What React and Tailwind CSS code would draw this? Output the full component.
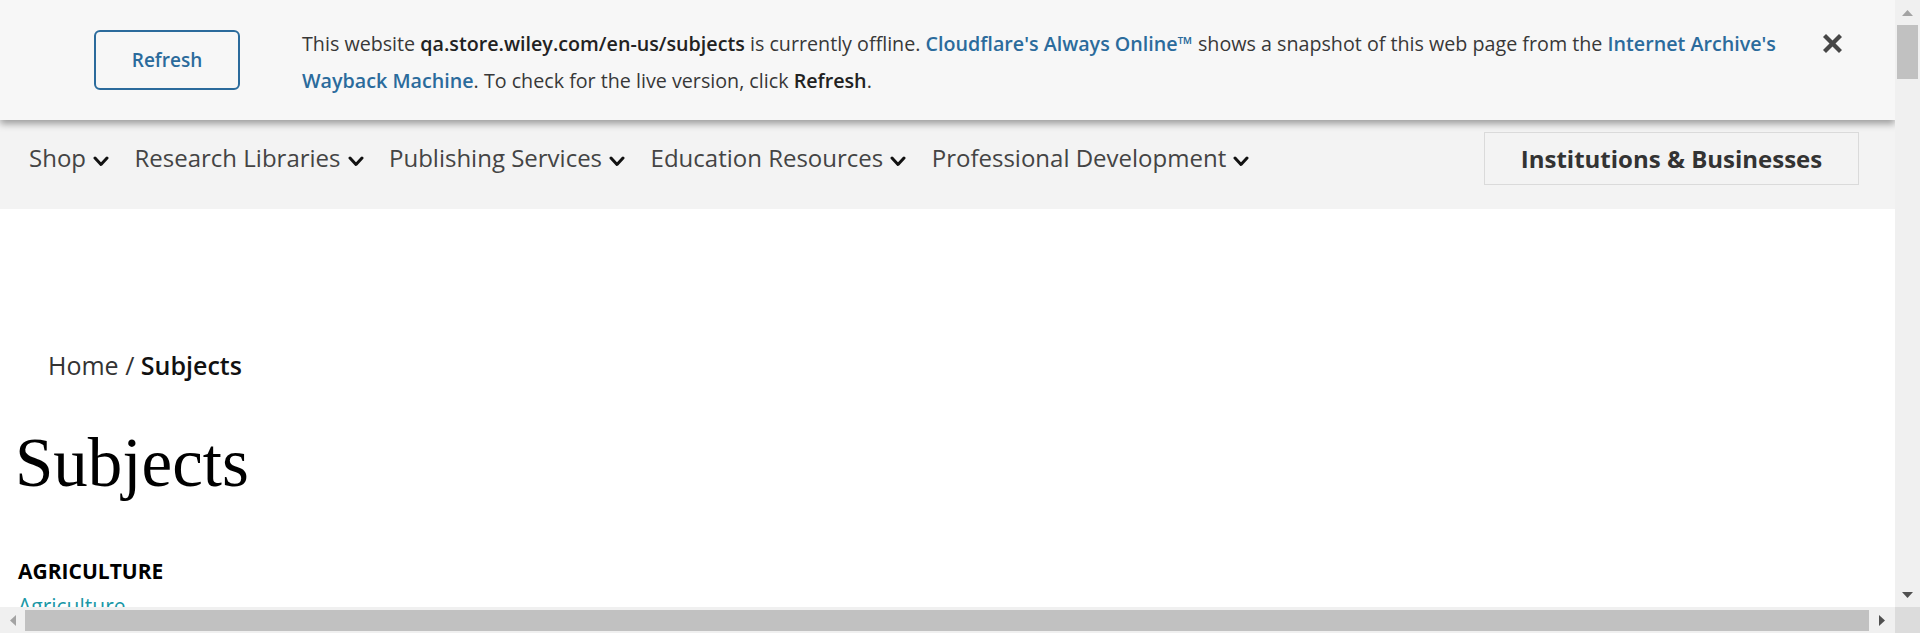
import React from "react";

const Chevron = () => (
  <svg width="16" height="11" viewBox="0 0 16 11" className="ml-[7px] mt-[7px] flex-none">
    <polyline points="2,2 8,8.5 14,2" fill="none" stroke="#111" strokeWidth="3" strokeLinecap="round" strokeLinejoin="round" />
  </svg>
);

const NavItem = ({ label }) => (
  <div className="flex items-center">
    <span>{label}</span>
    <Chevron />
  </div>
);

export default function App() {
  return (
    <div className="w-[1920px] h-[633px] overflow-hidden flex flex-col bg-white" style={{ fontFamily: "'Open Sans', 'Noto Sans', sans-serif" }}>
      <div className="flex flex-1 min-h-0">
        <div className="flex-1 flex flex-col min-w-0 overflow-hidden">
          {/* Banner */}
          <div className="h-[120px] flex-none bg-[#f7f7f7] relative z-10 shadow-[0_4px_7px_rgba(0,0,0,0.35)] flex items-start">
            <button className="ml-[94px] mt-[30px] w-[146px] h-[60px] flex-none rounded-[6px] border-2 border-[#2b6b9c] text-[#2b6b9c] text-[19px] font-semibold flex items-center justify-center">
              Refresh
            </button>
            <div className="ml-[62px] mt-[25px] text-[19.7px] leading-[37px] text-[#383838] whitespace-nowrap flex-none">
              This website <span className="font-semibold text-[#222]">qa.store.wiley.com/en-us/subjects</span> is currently offline.{" "}
              <span className="font-semibold text-[#2b6b9c]">Cloudflare's Always Online™</span> shows a snapshot of this web page from the{" "}
              <span className="font-semibold text-[#2b6b9c]">Internet Archive's</span>
              <br />
              <span className="font-semibold text-[#2b6b9c]">Wayback Machine</span>. To check for the live version, click{" "}
              <span className="font-semibold text-[#222]">Refresh</span>.
            </div>
            <div className="flex-1" />
            <div className="mt-[34px] mr-[53px] flex-none">
              <svg width="19" height="19" viewBox="0 0 19 19">
                <line x1="3" y1="3" x2="16" y2="16" stroke="#474747" strokeWidth="4.2" strokeLinecap="square" />
                <line x1="16" y1="3" x2="3" y2="16" stroke="#474747" strokeWidth="4.2" strokeLinecap="square" />
              </svg>
            </div>
          </div>

          {/* Nav */}
          <div className="h-[89px] flex-none bg-[#f3f3f3] flex items-center pb-[14px] pl-[29px] pr-[36px]">
            <div className="flex items-center gap-[25.5px] text-[24px] text-[#444] leading-none">
              <NavItem label="Shop" />
              <NavItem label="Research Libraries" />
              <NavItem label="Publishing Services" />
              <NavItem label="Education Resources" />
              <NavItem label="Professional Development" />
            </div>
            <div className="flex-1" />
            <div className="w-[375px] h-[53px] mt-[2px] border border-[#dadada] bg-[#f3f3f3] flex items-center justify-center text-[24px] font-bold text-[#333]">
              Institutions &amp; Businesses
            </div>
          </div>

          {/* Content */}
          <div className="flex-1 pl-[18px] pt-[140px]">
            <div className="ml-[30px] text-[25px] leading-[32px] text-[#333]">
              Home / <span className="font-semibold text-[#111]">Subjects</span>
            </div>
            <h1 className="mt-[48px] -ml-[3px] text-[69px] leading-[68px] text-black" style={{ fontFamily: "'Liberation Serif', serif" }}>
              Subjects
            </h1>
            <div className="mt-[60px] text-[21px] leading-[28px] font-bold text-black">AGRICULTURE</div>
            <div className="mt-[7px] text-[21px] leading-[28px] text-[#1a97a6]">Agriculture</div>
          </div>
        </div>

        {/* Vertical scrollbar */}
        <div className="w-[25px] flex-none bg-[#f0f0f0] flex flex-col">
          <div className="h-[25px] flex items-center justify-center">
            <svg width="11" height="6" viewBox="0 0 11 6"><polygon points="0,6 5.5,0 11,6" fill="#a3a3a3" /></svg>
          </div>
          <div className="h-[54px] mx-[2px] bg-[#c1c1c1]" />
          <div className="flex-1" />
          <div className="h-[25px] flex items-center justify-center">
            <svg width="11" height="6" viewBox="0 0 11 6"><polygon points="0,0 5.5,6 11,0" fill="#505050" /></svg>
          </div>
        </div>
      </div>

      {/* Horizontal scrollbar */}
      <div className="h-[26px] flex-none bg-[#f0f0f0] flex">
        <div className="w-[25px] flex items-center justify-center">
          <svg width="6" height="11" viewBox="0 0 6 11"><polygon points="6,0 0,5.5 6,11" fill="#a3a3a3" /></svg>
        </div>
        <div className="flex-1 mt-[3px] mb-[2px] bg-[#c1c1c1]" />
        <div className="w-[26px] flex items-center justify-center">
          <svg width="6" height="11" viewBox="0 0 6 11"><polygon points="0,0 6,5.5 0,11" fill="#505050" /></svg>
        </div>
        <div className="w-[25px] bg-[#dcdcdc]" />
      </div>
    </div>
  );
}
